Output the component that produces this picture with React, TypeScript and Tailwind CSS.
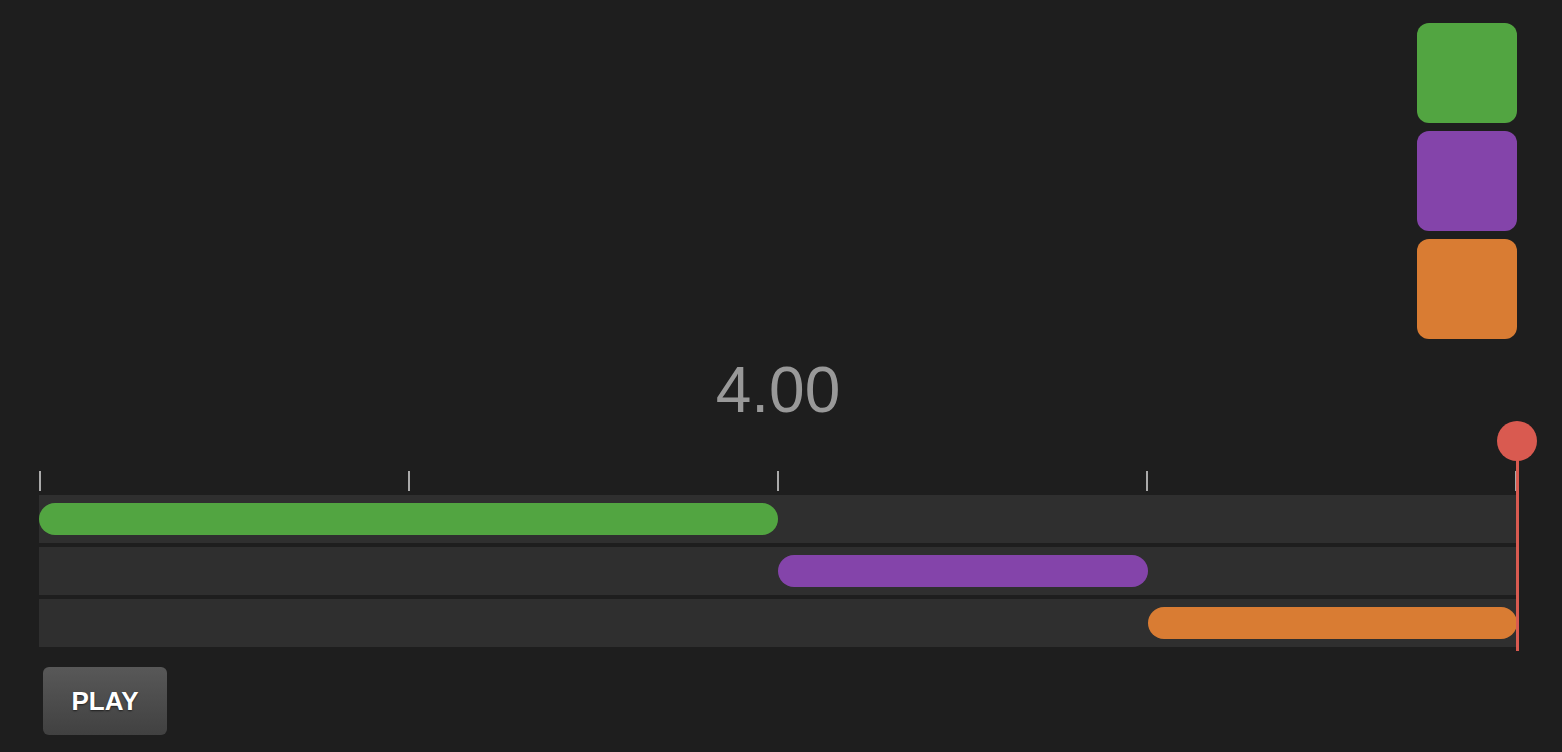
import React from 'react';

const tracks = [
  { color: 'bg-[#52a541]', start: 0, end: 0.5 },
  { color: 'bg-[#8444aa]', start: 0.5, end: 0.75 },
  { color: 'bg-[#d97c33]', start: 0.75, end: 1 },
];

const ticks = [0, 1, 2, 3, 4];

export default function App() {
  return (
    <div className="min-h-screen w-full bg-[#1e1e1e] pl-[39px] pt-[23px]" style={{ fontFamily: '"Liberation Sans", Arial, sans-serif' }}>
      <div className="w-[1478px]">
        <div className="flex flex-col items-end gap-2">
          <div className="h-[100px] w-[100px] rounded-xl bg-[#52a541]" />
          <div className="h-[100px] w-[100px] rounded-xl bg-[#8444aa]" />
          <div className="h-[100px] w-[100px] rounded-xl bg-[#d97c33]" />
        </div>

        <div className="mt-[19px] text-center text-[64px] leading-[64px] text-[#999999]">4.00</div>

        <div className="relative mt-[49px]">
          <div className="flex h-5 justify-between">
            {ticks.map((t) => (
              <div key={t} className="h-5 w-[2px] bg-[#aaaaaa]" />
            ))}
          </div>
          <div className="mt-1 flex flex-col gap-1">
            {tracks.map((tr, i) => (
              <div key={i} className="flex h-12 items-center bg-[#2f2f2f]">
                <div className="shrink-0" style={{ width: `${tr.start * 100}%` }} />
                <div
                  className={`h-8 shrink-0 rounded-full ${tr.color}`}
                  style={{ width: `${(tr.end - tr.start) * 100}%` }}
                />
              </div>
            ))}
          </div>
          <div className="absolute right-[-2px] top-[-16px] bottom-[-4px] w-[3px] bg-[#d95a50]" />
          <div className="absolute right-[-20px] top-[-50px] h-10 w-10 rounded-full bg-[#d95a50]" />
        </div>

        <button className="ml-1 mt-5 h-[68px] w-[124px] rounded-md bg-gradient-to-b from-[#585858] to-[#414141] text-[26px] font-bold text-white [text-shadow:0_1px_2px_rgba(0,0,0,0.6)]">
          PLAY
        </button>
      </div>
    </div>
  );
}
